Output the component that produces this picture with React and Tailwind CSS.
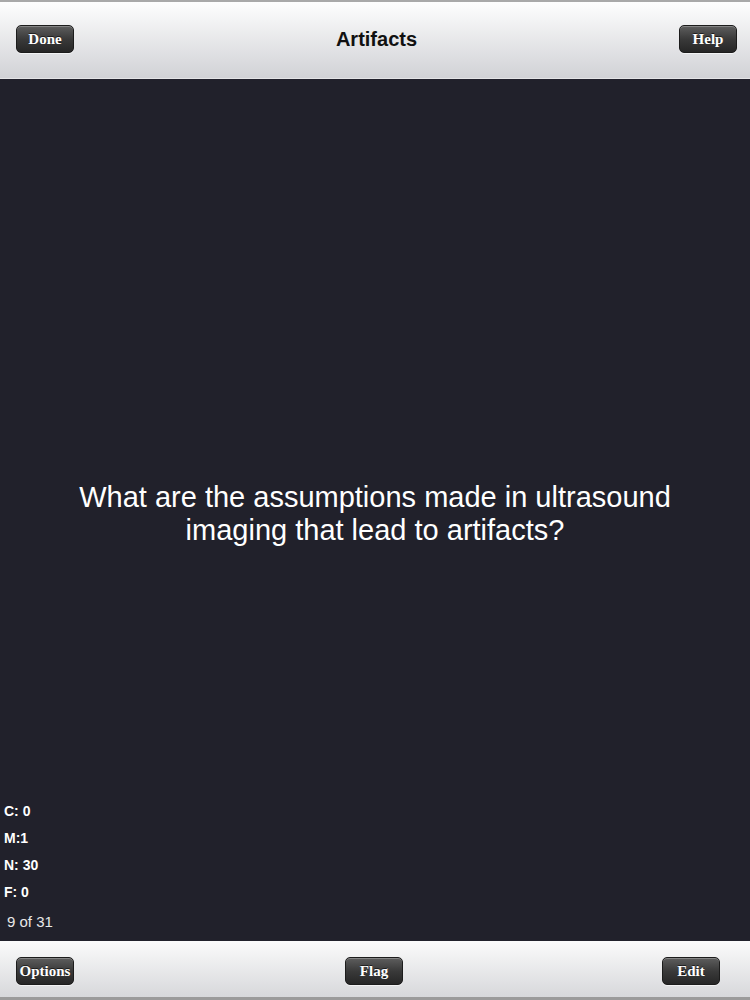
const Btn = ({ children }) => (
  <button className="h-[28px] w-[58px] rounded-[5px] border border-[#1c1c1c] bg-gradient-to-b from-[#5e5e5e] via-[#3a3a3a] to-[#262626] text-[15px] font-bold text-white shadow-[inset_0_1px_0_rgba(255,255,255,0.25),0_1px_0_rgba(255,255,255,0.6)] [font-family:'Liberation_Serif',serif] [text-shadow:0_-1px_0_rgba(0,0,0,0.6)]">
    {children}
  </button>
);

const App = () => {
  const stats = ["C: 0", "M:1", "N: 30", "F: 0"];

  return (
    <div className="flex h-[1000px] w-[750px] flex-col bg-[#21212b] [font-family:'Liberation_Sans',Arial,sans-serif]">
      {/* top bar */}
      <div className="flex h-[78px] items-center justify-between border-t-2 border-[#a9a9a9] bg-gradient-to-b from-[#fefefe] to-[#d1d2d6] pl-[16px] pr-[13px] pb-[2px]">
        <Btn>Done</Btn>
        <h1 className="text-[20px] font-bold text-[#111]">Artifacts</h1>
        <Btn>Help</Btn>
      </div>

      {/* card */}
      <div className="grid flex-1 border-t border-[#e4e4e6]">
        <div className="col-start-1 row-start-1 self-center pt-[7px] text-center text-[29px] leading-[33px] text-white">
          What are the assumptions made in ultrasound
          <br />
          imaging that lead to artifacts?
        </div>
        <div className="col-start-1 row-start-1 self-end pb-[6px] pl-[4px] text-[14px] text-white">
          {stats.map((s) => (
            <div key={s} className="font-bold leading-[27px]">
              {s}
            </div>
          ))}
          <div className="mt-[2px] pl-[3px] text-[15px] leading-[27px] text-[#e8e8e8]">9 of 31</div>
        </div>
      </div>

      {/* bottom bar */}
      <div className="flex h-[59px] items-center justify-between border-b-[3px] border-[#9b9b9b] bg-gradient-to-b from-[#fbfbfb] to-[#d7d8db] pl-[16px] pr-[30px] pt-[4px]">
        <Btn>Options</Btn>
        <div className="ml-[12px]">
          <Btn>Flag</Btn>
        </div>
        <Btn>Edit</Btn>
      </div>
    </div>
  );
};

export default App;
